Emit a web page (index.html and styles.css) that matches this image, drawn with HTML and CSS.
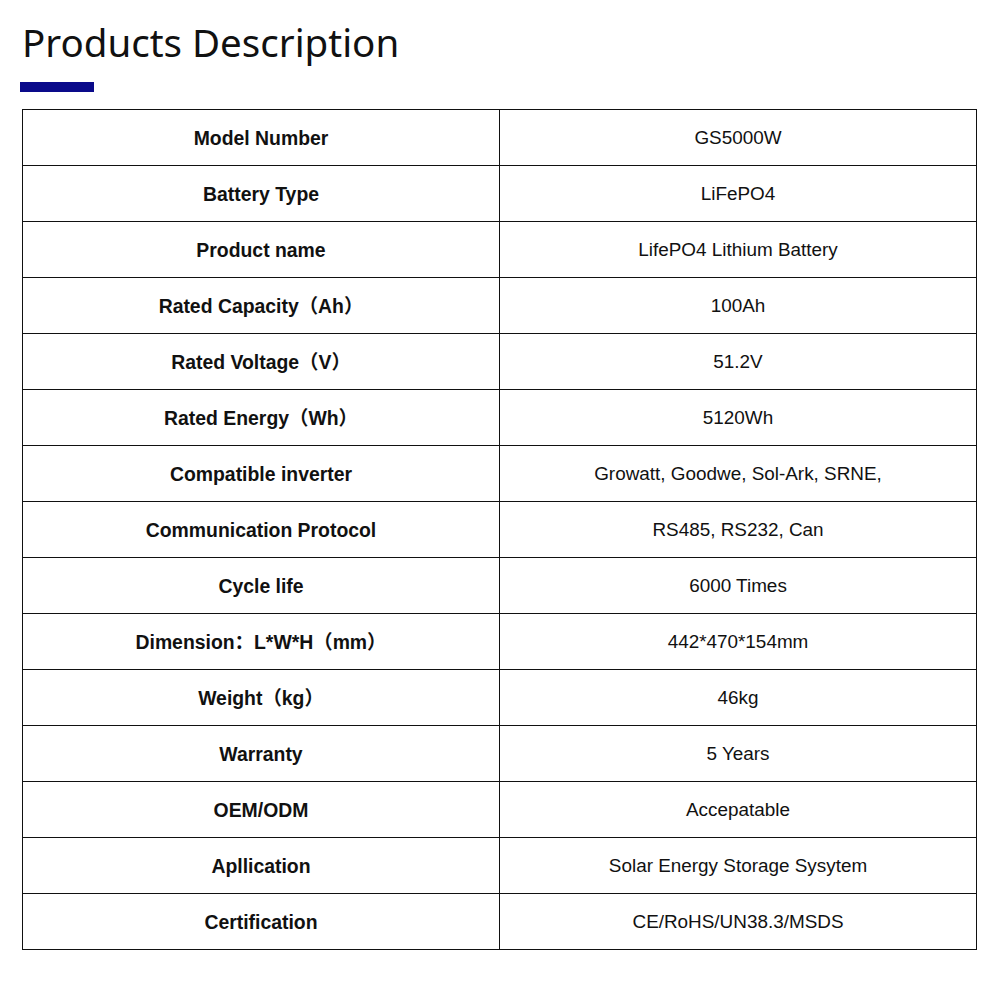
FILE: index.html
```html
<!DOCTYPE html>
<html>
<head>
<meta charset="utf-8">
<link rel="stylesheet" href="styles.css">
</head>
<body>
<section class="desc">
  <h1 class="title">Products Description</h1>
  <div class="bar"></div>
  <table class="spec">
    <tr><td class="k">Model Number</td><td class="v">GS5000W</td></tr>
    <tr><td class="k">Battery Type</td><td class="v">LiFePO4</td></tr>
    <tr><td class="k">Product name</td><td class="v">LifePO4 Lithium Battery</td></tr>
    <tr><td class="k">Rated Capacity（Ah）</td><td class="v">100Ah</td></tr>
    <tr><td class="k">Rated Voltage（V）</td><td class="v">51.2V</td></tr>
    <tr><td class="k">Rated Energy（Wh）</td><td class="v">5120Wh</td></tr>
    <tr><td class="k">Compatible inverter</td><td class="v">Growatt, Goodwe, Sol-Ark, SRNE,</td></tr>
    <tr><td class="k">Communication Protocol</td><td class="v">RS485, RS232, Can</td></tr>
    <tr><td class="k">Cycle life</td><td class="v">6000 Times</td></tr>
    <tr><td class="k">Dimension：L*W*H（mm）</td><td class="v">442*470*154mm</td></tr>
    <tr><td class="k">Weight（kg）</td><td class="v">46kg</td></tr>
    <tr><td class="k">Warranty</td><td class="v">5 Years</td></tr>
    <tr><td class="k">OEM/ODM</td><td class="v">Accepatable</td></tr>
    <tr><td class="k">Apllication</td><td class="v">Solar Energy Storage Sysytem</td></tr>
    <tr><td class="k">Certification</td><td class="v">CE/RoHS/UN38.3/MSDS</td></tr>
  </table>
</section>
</body>
</html>
```

FILE: styles.css
```css
html, body {
  margin: 0;
  padding: 0;
  background: #ffffff;
}

.desc {
  padding: 15px 23px 0 22px;
}

.title {
  margin: 0;
  font-family: "Noto Sans", "Open Sans", sans-serif;
  font-weight: 400;
  font-size: 38.5px;
  line-height: 54px;
  color: #111111;
  letter-spacing: 0;
}

.bar {
  width: 74px;
  height: 10px;
  background: #0a0a8a;
  margin: 13px 0 0 -2px;
}

.spec {
  margin-top: 17px;
  width: 955px;
  border-collapse: collapse;
  table-layout: fixed;
  font-family: "Liberation Sans", Arial, "Noto Sans CJK SC", sans-serif;
  font-size: 18.9px;
  line-height: 22px;
  color: #111111;
}

.spec td {
  border: 1px solid #111111;
  height: 55px;
  padding: 0;
  text-align: center;
  vertical-align: middle;
  width: 50%;
}

.spec .k {
  font-weight: 700;
  font-size: 19.4px;
}
```
